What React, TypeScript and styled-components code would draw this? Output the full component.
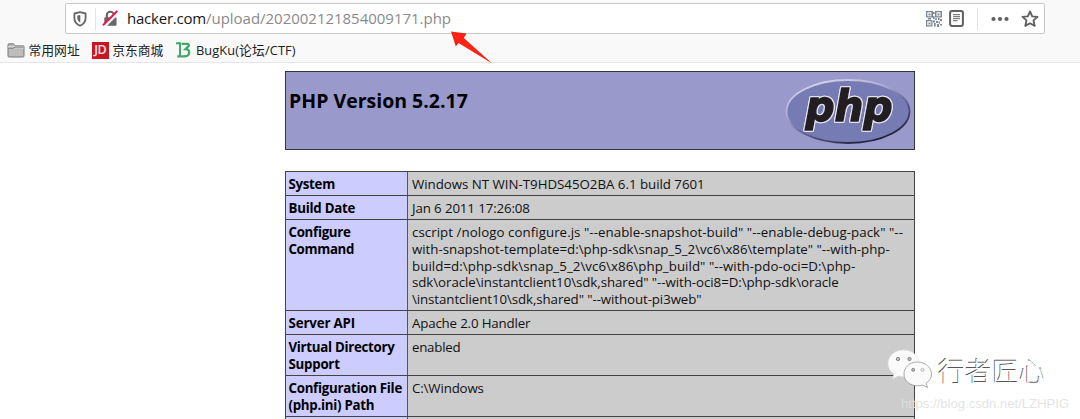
import React from "react";
import styled, { createGlobalStyle } from "styled-components";

const GlobalStyle = createGlobalStyle`
  * { box-sizing: border-box; }
  body { margin: 0; background: #fff; overflow: hidden; font-family: "Open Sans", "Noto Sans CJK SC", sans-serif; }
  svg { display: block; flex: none; }
`;

const Page = styled.div`
  position: relative;
  height: 419px;
  overflow: hidden;
`;

const Toolbar = styled.header`
  height: 63px;
  padding: 3px 35px 0 65px;
  background: #f9f9fa;
  border-bottom: 1px solid #e6e6e8;
`;

const AddressBar = styled.div`
  display: flex;
  align-items: center;
  height: 31px;
  padding: 0 5px 0 7px;
  background: #fff;
  border: 1px solid #c8c8c8;
  border-radius: 2px;
`;

const Divider = styled.span<{ $left: number; $right: number }>`
  width: 1px;
  height: 22px;
  margin: 0 ${(p) => p.$right}px 0 ${(p) => p.$left}px;
  background: #e4e4e4;
`;

const Url = styled.div`
  flex: 1;
  margin: -1px 0 0 8px;
  font-size: 15px;
  line-height: 20px;
  color: #8a8a8a;
  white-space: nowrap;
`;

const Fit = styled.span<{ $track?: number }>`
  letter-spacing: ${(p) => p.$track ?? 0}px;
  white-space: nowrap;
`;

const Host = styled(Fit)`
  color: #161616;
`;

const Actions = styled.div`
  display: flex;
  align-items: center;
`;

const Bookmarks = styled.nav`
  display: flex;
  align-items: center;
  height: 28px;
  margin: 2px 0 0 -58px;
`;

const Bookmark = styled.div<{ $gap: number; $after: number }>`
  display: flex;
  align-items: center;
  gap: ${(p) => p.$gap}px;
  margin-right: ${(p) => p.$after}px;
  font-size: 12.8px;
  line-height: 18px;
  color: #222;
`;

const JdBadge = styled.span`
  width: 17px;
  height: 17px;
  background: #c81623;
  color: #f8e4e4;
  font: 600 12.5px/16px "Open Sans", sans-serif;
  letter-spacing: -0.5px;
  text-align: center;
`;

const Info = styled.main`
  width: 630px;
  margin: 8px 0 0 285px;
  color: #000;
`;

const Banner = styled.section`
  display: flex;
  justify-content: space-between;
  height: 79px;
  padding: 7px 2px 0 3px;
  background: #9999cc;
  border: 1px solid #333340;
`;

const Title = styled.h1`
  margin: 8px 0 0;
  font-size: 19.5px;
  line-height: 28px;
  font-weight: 700;
`;

const Table = styled.div`
  margin-top: 21px;
  border: 1px solid #444;
  border-bottom: 0;
`;

const Row = styled.div<{ $h: number }>`
  display: grid;
  grid-template-columns: 122px 1fr;
  height: ${(p) => p.$h}px;
  border-bottom: 1px solid #444;
  font-size: 13.3px;
  line-height: 16.8px;
`;

const Cell = styled.div`
  display: flex;
  flex-direction: column;
  padding: 4px 0 0 3px;
`;

const Label = styled(Cell)`
  padding-left: 2.5px;
  background: #ccccff;
  border-right: 1px solid #555;
  font-weight: 700;
`;

const Value = styled(Cell)`
  padding-left: 4px;
  background: #cccccc;
  color: #111;
`;

const Pointer = styled.svg`
  position: absolute;
  left: 448px;
  top: 29px;
`;

const Watermark = styled.div`
  position: absolute;
  left: 886px;
  top: 347px;
  display: flex;
`;

const Brand = styled.span`
  margin: 5px 0 0 4px;
  font: 300 27px/38px "Noto Sans CJK SC", sans-serif;
  color: #fff;
  white-space: nowrap;
  text-shadow: -0.7px -0.7px 0.6px #555;
`;

const Source = styled.span`
  position: absolute;
  left: 901px;
  top: 396px;
  font: 13.1px/16px "Liberation Sans", sans-serif;
  color: rgba(225, 225, 225, 0.9);
  white-space: nowrap;
`;

const LogoLetters = styled.text`
  font: italic 700 42px "DejaVu Sans", sans-serif;
  fill: #211d20;
  stroke: #211d20;
  stroke-width: 1.4px;
  filter: drop-shadow(1px 0 0 #e4e4ee) drop-shadow(-1px 0 0 #e4e4ee) drop-shadow(0 1px 0 #e4e4ee) drop-shadow(0 -1px 0 #e4e4ee);
`;

type Line = [string, number];
const rows: { h: number; label: Line[]; value: Line[] }[] = [
  { h: 24, label: [["System", -0.3]], value: [["Windows NT WIN-T9HDS45O2BA 6.1 build 7601", -0.02]] },
  { h: 24, label: [["Build Date", -0.25]], value: [["Jan 6 2011 17:26:08", -0.12]] },
  {
    h: 91,
    label: [["Configure", -0.3], ["Command", -0.35]],
    value: [
      ['cscript /nologo configure.js "--enable-snapshot-build" "--enable-debug-pack" "--', 0.05],
      ['with-snapshot-template=d:\\php-sdk\\snap_5_2\\vc6\\x86\\template" "--with-php-', -0.02],
      ['build=d:\\php-sdk\\snap_5_2\\vc6\\x86\\php_build" "--with-pdo-oci=D:\\php-', 0.05],
      ['sdk\\oracle\\instantclient10\\sdk,shared" "--with-oci8=D:\\php-sdk\\oracle', -0.06],
      ['\\instantclient10\\sdk,shared" "--without-pi3web"', -0.09],
    ],
  },
  { h: 24, label: [["Server API", -0.15]], value: [["Apache 2.0 Handler", -0.17]] },
  { h: 41, label: [["Virtual Directory", -0.3], ["Support", -0.25]], value: [["enabled", -0.25]] },
  { h: 41, label: [["Configuration File", -0.28], ["(php.ini) Path", -0.28]], value: [["C:\\Windows", -0.15]] },
  { h: 24, label: [], value: [] },
];

const Shield = () => (
  <svg width="14" height="16" viewBox="0 0 14 16" fill="none" stroke="#666">
    <path d="M7 1.2 12.6 2.5V7c0 3.5-2 6.2-5.6 7.8C3.400 13.200 1.400 10.500 1.400 7V2.500Z" strokeWidth="1.800" strokeLinejoin="round" />
    <path d="M7.300 4v7.800C5.200 10.300 4.300 8.600 4.300 6.700V4.600Z" fill="#666" stroke="none" />
  </svg>
);

const InsecureLock = () => (
  <svg width="17" height="17" viewBox="0 0 17 17" fill="none">
    <path d="M4.800 8V5.200a3.500 3.500 0 0 1 7 0V8" stroke="#666" strokeWidth="2.100" />
    <rect x="2.300" y="7.200" width="12.200" height="8.600" rx="1" fill="#666" />
    <path d="M2 16.500 16 2.300" stroke="#fff" strokeWidth="3.400" />
    <path d="M1 15.300 15.300 1" stroke="#f5144b" strokeWidth="2" />
  </svg>
);

const QrIcon = () => (
  <svg width="16" height="16" viewBox="0 0 16 16" fill="#7d8796">
    <path fillRule="evenodd" d="M0 0h7v6.500H0ZM1.300 1.300v4h4v-4ZM9 0h7v6.500H9Zm1.500 1.300v4h4v-4ZM0 9h6.500v6.500H0Zm1.300 1.300v4h4v-4Z" />
    <path d="M2.500 2.500h2v2h-2ZM11.500 2.500h2v2h-2ZM2.500 11.500h2v2h-2ZM7 1h1.500v2H7ZM7 5h1.500v3H7ZM2 7h3v1.500H2ZM9 7.500h2V9H9ZM12 7h1.500v2H12ZM14 8h2v2h-2ZM7 9.500h2v2H7ZM10 10h2v2h-2ZM12.500 10.500H14v2h-1.500ZM8 12h1.700v3.500H8ZM11 13h2v3h-2ZM14 13h2v1.500h-2Z" />
  </svg>
);

const ReaderIcon = () => (
  <svg width="15" height="17" viewBox="0 0 15 17" fill="none" stroke="#606060">
    <rect x="1.100" y="1.100" width="12.800" height="14.800" rx="1.800" strokeWidth="2" />
    <path d="M4 4.700h7M4 6.700h7M4 8.700h7M4 10.700h4.500" strokeWidth="1" />
  </svg>
);

const StarIcon = () => (
  <svg width="18" height="18" viewBox="0 0 18 18" fill="none" stroke="#606060" strokeWidth="1.900" strokeLinejoin="round">
    <path d="m9 1.500 2.200 4.900 5.300.5-4 3.500 1.200 5.500L9 13.200l-4.700 2.700 1.200-5.500-4-3.500 5.300-.5Z" />
  </svg>
);

const FolderIcon = () => (
  <svg width="18" height="15" viewBox="0 0 18 15" stroke="#777" fill="#aaa">
    <path d="M1 13V2Q1 .8 2 .8h4.500L8 2.600h8q1 0 1 1V13q0 1-1 1H2q-1 0-1-1Z" fill="#bcbcbc" />
    <path d="M1 5.500V3h6l1.500-.5H17v3Z" fill="#d4d4d4" stroke="none" />
    <path d="M1 5.200h5.500L8.200 4H17" fill="none" />
  </svg>
);

const BugKuIcon = () => (
  <svg width="15" height="16" viewBox="0 0 15 16" fill="none" stroke="#3fa968" strokeWidth="2.300">
    <path d="M0 1.500 3 1l2.500.8M4 2v12" strokeWidth="2" />
    <path d="M6 1.800h5.500q2 .5 1 2.300L9.500 7.200q4 .1 3.700 3.600-.5 3.500-5 3.500H1.300" />
  </svg>
);

const PhpLogo = () => (
  <svg width="130" height="70" viewBox="0 0 130 70">
    <defs>
      <linearGradient id="rim" x1="0.2" y1="0" x2="0.8" y2="1">
        <stop offset="0" stopColor="#d8d8ee" />
        <stop offset="0.35" stopColor="#a8aacf" />
        <stop offset="0.6" stopColor="#5a5d91" />
        <stop offset="1" stopColor="#15152b" />
      </linearGradient>
    </defs>
    <ellipse cx="66" cy="32.500" rx="61.500" ry="31.500" fill="#777bb3" stroke="url(#rim)" strokeWidth="1.800" />
    <LogoLetters x="23.500" y="41.500" textLength="87" lengthAdjust="spacingAndGlyphs">
      php
    </LogoLetters>
  </svg>
);

const WeChatIcon = () => (
  <svg width="48" height="42" viewBox="0 0 48 42">
    <g fill="#fafafa" stroke="#8b8b8b" strokeWidth="0.700">
      <path d="M17.500 3C8.500 3 2 9 2 16.500c0 4.500 2.200 8 6 10.500l-1.500 5 5.500-3c2 .6 4 .9 6 .8C28 29.500 33 24 33 16.500 33 9 26.500 3 17.500 3Z" stroke="#ddd" />
      <path d="M31.500 15C23.500 15 18 20.500 18 27s5.500 11.800 13.500 11.800c2 0 3.500-.3 5-.8l5 2.500-1.300-4.300C43.500 34 45.500 31 45.500 27c0-6.500-6-12-14-12Z" />
    </g>
    <g fill="#bbb" stroke="#777" strokeWidth="0.800">
      <circle cx="12" cy="12" r="1.700" />
      <circle cx="23.500" cy="12" r="1.700" />
      <circle cx="27.200" cy="22.800" r="1.500" />
      <circle cx="36.500" cy="22.800" r="1.500" fill="#eee" stroke="#aaa" />
    </g>
  </svg>
);

const MoreIcon = () => (
  <svg width="18" height="6" viewBox="0 0 18 6" fill="#606060">
    <circle cx="2.500" cy="3" r="2.100" />
    <circle cx="9" cy="3" r="2.100" />
    <circle cx="15.500" cy="3" r="2.100" />
  </svg>
);

const ActionGroup = styled.div<{ $gap: number }>`
  display: flex;
  align-items: center;
  gap: ${(p) => p.$gap}px;
`;

export default function App() {
  return (
    <Page>
      <GlobalStyle />
      <Toolbar>
        <AddressBar>
          <Shield />
          <Divider $left={8} $right={6} />
          <InsecureLock />
          <Url>
            <Host $track={-0.22}>hacker.com</Host>
            <Fit $track={-0.02}>/upload/202002121854009171.php</Fit>
          </Url>
          <Actions>
            <ActionGroup $gap={7}>
              <QrIcon />
              <ReaderIcon />
            </ActionGroup>
            <Divider $left={13} $right={13} />
            <ActionGroup $gap={12}>
              <MoreIcon />
              <StarIcon />
            </ActionGroup>
          </Actions>
        </AddressBar>
        <Bookmarks>
          <Bookmark $gap={3.5} $after={12}>
            <FolderIcon />
            <Fit>常用网址</Fit>
          </Bookmark>
          <Bookmark $gap={3.5} $after={12.5}>
            <JdBadge>JD</JdBadge>
            <Fit>京东商城</Fit>
          </Bookmark>
          <Bookmark $gap={5} $after={0}>
            <BugKuIcon />
            <Fit $track={0.12}>BugKu(论坛/CTF)</Fit>
          </Bookmark>
        </Bookmarks>
      </Toolbar>
      <Info>
        <Banner>
          <Title>
            <Fit>PHP Version 5.2.17</Fit>
          </Title>
          <PhpLogo />
        </Banner>
        <Table>
          {rows.map((row, i) => (
            <Row key={i} $h={row.h}>
              <Label>
                {row.label.map(([text, track]) => (
                  <Fit key={text} $track={track}>{text}</Fit>
                ))}
              </Label>
              <Value>
                {row.value.map(([text, track]) => (
                  <Fit key={text} $track={track}>{text}</Fit>
                ))}
              </Value>
            </Row>
          ))}
        </Table>
      </Info>
      <Pointer width="48" height="38" viewBox="0 0 48 38" fill="#fb2314">
        <path d="M3 2.500 18.500 4.500 15.800 9 44.500 34.700 10.500 14 7.800 17.500Z" />
      </Pointer>
      <Watermark>
        <WeChatIcon />
        <Brand>行者匠心</Brand>
      </Watermark>
      <Source>https://blog.csdn.net/LZHPIG</Source>
    </Page>
  );
}
